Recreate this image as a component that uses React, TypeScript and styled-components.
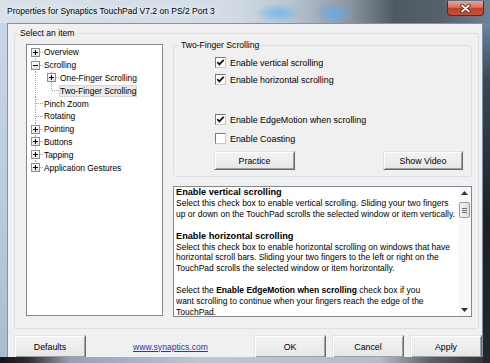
import React from 'react';
import styled, { createGlobalStyle } from 'styled-components';

const Global = createGlobalStyle`
  html, body { margin: 0; padding: 0; background: #fff; overflow: hidden; }
  body { font-family: "Liberation Sans", Arial, sans-serif; }
  #root { width: 490px; height: 363px; }
`;

const FONT = `"Liberation Sans", Arial, sans-serif`;

const Window = styled.div`
  width: 490px;
  height: 363px;
  box-sizing: border-box;
  display: flex;
  flex-direction: column;
  padding-bottom: 6px;
  overflow: hidden;
  background:
    linear-gradient(180deg, #7f9dbd 0%, #3c4855 22%, #1d2127 60%, #23282e 100%) right top / 7px 100% no-repeat,
    linear-gradient(90deg, #121416 0px, #2a2e33 28px, #8fa4ba 70px, #b6c8da 200px, #aebfd0 380px, #59636d 430px, #2a2f35 490px) left bottom / 100% 6px no-repeat,
    linear-gradient(180deg, #c9d8e7 0%, #b8cadc 60%, #a9bccf 100%);
`;

const TitleBar = styled.div`
  height: 23px;
  flex: none;
  display: flex;
  align-items: flex-start;
  padding: 0 6px 0 7px;
  background:
    radial-gradient(ellipse 24px 10px at 278px 13px, rgba(110, 180, 235, 0.85), rgba(110, 180, 235, 0)),
    radial-gradient(ellipse 22px 10px at 334px 13px, rgba(95, 170, 232, 0.85), rgba(95, 170, 232, 0)),
    linear-gradient(90deg, #d8e1ea 0px, #d3dce6 230px, #b9c5d0 290px, #8a95a0 350px, #4e5964 395px, #55606b 440px, #6e8196 490px);
`;

const TitleText = styled.div`
  margin-top: 5px;
  font-family: ${FONT};
  font-size: 8.5px;
  line-height: 13px;
  color: #000;
  white-space: nowrap;
  text-shadow: 0 0 4px #fff, 0 0 7px rgba(255, 255, 255, 0.9);
`;

const CloseButton = styled.div`
  margin-left: auto;
  margin-top: 1px;
  width: 37px;
  height: 15px;
  box-sizing: border-box;
  border: 1px solid #6b2219;
  border-top: none;
  border-radius: 0 0 4px 4px;
  background: linear-gradient(180deg, #e9a497 0%, #d6725f 45%, #c1402c 52%, #c65038 100%);
  display: flex;
  align-items: center;
  justify-content: center;
`;

const Client = styled.div`
  flex: 1;
  min-height: 0;
  margin: 0 7px;
  background: #f0f0f0;
  border: 1px solid #8094a9;
  border-bottom: none;
  display: flex;
  flex-direction: column;
  padding: 0 3px 0 6px;
  overflow: hidden;
`;

const GroupBox = styled.div<{ $mt: number }>`
  flex: none;
  display: flex;
  flex-direction: column;
  margin-top: ${(p) => p.$mt}px;
  border: 1px solid #d5dfe5;
  border-radius: 3px;
`;

const Caption = styled.div<{ $ml: number }>`
  align-self: flex-start;
  margin-top: -6px;
  margin-left: ${(p) => p.$ml}px;
  padding: 0 2px;
  background: #f0f0f0;
  font-family: ${FONT};
  font-size: 8.6px;
  line-height: 11px;
  color: #000;
  white-space: nowrap;
`;

const GroupBody = styled.div`
  display: flex;
  align-items: flex-start;
  padding: 1px 6px 11px 11px;
`;

const Tree = styled.div`
  flex: none;
  width: 137px;
  height: 272px;
  box-sizing: border-box;
  margin-top: 4px;
  border: 1px solid #828790;
  background: #fff;
  padding-top: 1px;
  display: flex;
  flex-direction: column;
`;

const TreeRow = styled.div`
  height: 12.8px;
  display: flex;
  align-items: stretch;
`;

type VLine = 'full' | 'top' | 'bottom' | 'none';

const dotV = 'repeating-linear-gradient(to bottom, #a3a3a3 0 1px, transparent 1px 2px)';
const dotH = 'repeating-linear-gradient(to right, #a3a3a3 0 1px, transparent 1px 2px)';

const cellBg = (v: VLine, h: boolean) => {
  const layers: string[] = [];
  if (h) layers.push(`${dotH} 9px 50% / 7px 1px no-repeat`);
  if (v === 'full') layers.push(`${dotV} 8px 0 / 1px 100% no-repeat`);
  if (v === 'top') layers.push(`${dotV} 8px 0 / 1px 50% no-repeat`);
  if (v === 'bottom') layers.push(`${dotV} 8px 100% / 1px 50% no-repeat`);
  return layers.length ? layers.join(', ') : 'none';
};

const GuideCell = styled.div<{ $v: VLine; $h: boolean }>`
  flex: none;
  width: 16px;
  display: flex;
  align-items: center;
  background: ${(p) => cellBg(p.$v, p.$h)};
`;

const Expander = styled.span`
  width: 9px;
  height: 9px;
  box-sizing: border-box;
  margin-left: 4px;
  border: 1px solid #8e8f8f;
  background: linear-gradient(180deg, #ffffff, #e4e4e4);
  display: flex;
  align-items: center;
  justify-content: center;
`;

const TreeLabel = styled.span<{ $selected?: boolean }>`
  align-self: center;
  padding: 0 1px;
  font-family: ${FONT};
  font-size: 8.4px;
  line-height: 12px;
  color: #000;
  white-space: nowrap;
  background: ${(p) => (p.$selected ? '#ebebeb' : 'transparent')};
  box-shadow: ${(p) => (p.$selected ? 'inset 0 0 0 1px #d6d6d6' : 'none')};
`;

const RightColumn = styled.div`
  flex: 1;
  min-width: 0;
  margin-left: 10px;
  display: flex;
  flex-direction: column;
`;

const OptionsBody = styled.div`
  display: flex;
  flex-direction: column;
  padding: 3px 8px 6px 40px;
`;

const CheckRow = styled.div<{ $mt?: number }>`
  height: 17px;
  margin-top: ${(p) => p.$mt ?? 0}px;
  padding-left: 1px;
  display: flex;
  align-items: center;
  gap: 4px;
`;

const CheckBox = styled.span`
  flex: none;
  width: 11px;
  height: 11px;
  box-sizing: border-box;
  border: 1px solid;
  border-color: #7a7a7a #c9c9c9 #c9c9c9 #7a7a7a;
  background: #fff;
  display: flex;
  align-items: center;
  justify-content: center;
`;

const CheckLabel = styled.span`
  font-family: ${FONT};
  font-size: 8.9px;
  color: #000;
  white-space: nowrap;
`;

const ButtonRow = styled.div`
  margin-top: 4px;
  display: flex;
  justify-content: space-between;
`;

const PushButton = styled.div<{ $w: number; $h: number }>`
  flex: none;
  width: ${(p) => p.$w}px;
  height: ${(p) => p.$h}px;
  box-sizing: border-box;
  border: 1px solid;
  border-color: #e3e3e3 #696969 #696969 #e3e3e3;
  box-shadow: inset 1px 1px 0 #ffffff, inset -1px -1px 0 #a0a0a0;
  background: linear-gradient(180deg, #f3f3f3 0%, #ededed 50%, #e6e6e6 100%);
  font-family: ${FONT};
  font-size: 8.8px;
  color: #000;
  display: flex;
  align-items: center;
  justify-content: center;
  white-space: nowrap;
`;

const HelpBox = styled.div`
  flex: none;
  height: 131px;
  box-sizing: border-box;
  margin-top: 9px;
  border: 1px solid #828790;
  background: #fff;
  display: flex;
  overflow: hidden;
`;

const HelpText = styled.div`
  flex: 1;
  min-width: 0;
  padding: 0 2px;
  font-family: ${FONT};
  font-size: 8.5px;
  line-height: 10.9px;
  color: #000;
  overflow: hidden;
`;

const Para = styled.div`
  margin-bottom: 10.9px;
`;

const Line = styled.div`
  white-space: nowrap;
`;

const Heading = styled.div`
  white-space: nowrap;
  font-weight: bold;
  font-size: 9.2px;
`;

const ScrollBar = styled.div`
  flex: none;
  width: 13px;
  background: #f8f8f8;
  display: flex;
  flex-direction: column;
`;

const ScrollArrow = styled.div`
  height: 12px;
  flex: none;
  display: flex;
  align-items: center;
  justify-content: center;
`;

const Track = styled.div`
  flex: 1;
  padding-top: 3px;
  display: flex;
  flex-direction: column;
  align-items: center;
`;

const Thumb = styled.div`
  width: 11px;
  height: 16px;
  box-sizing: border-box;
  border: 1px solid #9b9b9b;
  border-radius: 2px;
  background: linear-gradient(90deg, #f4f4f4, #dcdcdc);
  display: flex;
  flex-direction: column;
  align-items: center;
  justify-content: center;
  gap: 1px;
`;

const Grip = styled.span`
  width: 5px;
  height: 1px;
  background: #6f6f6f;
`;

const BottomBar = styled.div`
  flex: none;
  height: 23px;
  margin-top: 6px;
  margin-right: -3px;
  display: flex;
  align-items: center;
`;

const Link = styled.span`
  margin-left: 47px;
  font-family: ${FONT};
  font-size: 8.6px;
  color: #2636b8;
  text-decoration: underline;
  white-space: nowrap;
`;

const DialogButtons = styled.div`
  margin-left: auto;
  display: flex;
  gap: 6px;
`;

const Plus = ({ minus }: { minus?: boolean }) => (
  <svg width="5" height="5" viewBox="0 0 5 5">
    <rect x="0" y="2" width="5" height="1" fill="#000" />
    {!minus && <rect x="2" y="0" width="1" height="5" fill="#000" />}
  </svg>
);

const Check = () => (
  <svg width="9" height="9" viewBox="0 0 9 9">
    <path d="M1.3 4.2 L3.4 6.4 L7.7 1.9" fill="none" stroke="#111" strokeWidth="1.7" />
  </svg>
);

type CellDef = { v: VLine; h?: boolean; exp?: '+' | '-' };
type RowDef = { cells: CellDef[]; label: string; selected?: boolean };

const treeRows: RowDef[] = [
  { cells: [{ v: 'bottom', h: true, exp: '+' }], label: 'Overview' },
  { cells: [{ v: 'full', h: true, exp: '-' }], label: 'Scrolling' },
  { cells: [{ v: 'full' }, { v: 'full', h: true, exp: '+' }], label: 'One-Finger Scrolling' },
  { cells: [{ v: 'full' }, { v: 'top', h: true }], label: 'Two-Finger Scrolling', selected: true },
  { cells: [{ v: 'full', h: true }], label: 'Pinch Zoom' },
  { cells: [{ v: 'full', h: true }], label: 'Rotating' },
  { cells: [{ v: 'full', h: true, exp: '+' }], label: 'Pointing' },
  { cells: [{ v: 'full', h: true, exp: '+' }], label: 'Buttons' },
  { cells: [{ v: 'full', h: true, exp: '+' }], label: 'Tapping' },
  { cells: [{ v: 'top', h: true, exp: '+' }], label: 'Application Gestures' },
];

const options = [
  { label: 'Enable vertical scrolling', checked: true, mt: 0 },
  { label: 'Enable horizontal scrolling', checked: true, mt: 0 },
  { label: 'Enable EdgeMotion when scrolling', checked: true, mt: 23 },
  { label: 'Enable Coasting', checked: false, mt: 2 },
];

export default function App() {
  return (
    <>
      <Global />
      <Window>
        <TitleBar>
          <TitleText>Properties for Synaptics TouchPad V7.2 on PS/2 Port 3</TitleText>
          <CloseButton>
            <svg width="11" height="9" viewBox="0 0 11 9">
              <path d="M2 1.5 L9 7.5 M9 1.5 L2 7.5" stroke="#5a1a12" strokeWidth="3.4" strokeLinecap="round" />
              <path d="M2 1.5 L9 7.5 M9 1.5 L2 7.5" stroke="#ffffff" strokeWidth="1.8" strokeLinecap="round" />
            </svg>
          </CloseButton>
        </TitleBar>
        <Client>
          <GroupBox $mt={9}>
            <Caption $ml={3}>Select an item</Caption>
            <GroupBody>
              <Tree>
                {treeRows.map((row) => (
                  <TreeRow key={row.label}>
                    {row.cells.map((c, i) => (
                      <GuideCell key={i} $v={c.v} $h={!!c.h}>
                        {c.exp && (
                          <Expander>
                            <Plus minus={c.exp === '-'} />
                          </Expander>
                        )}
                      </GuideCell>
                    ))}
                    <TreeLabel $selected={row.selected}>{row.label}</TreeLabel>
                  </TreeRow>
                ))}
              </Tree>
              <RightColumn>
                <GroupBox $mt={5}>
                  <Caption $ml={5}>Two-Finger Scrolling</Caption>
                  <OptionsBody>
                    {options.map((o) => (
                      <CheckRow key={o.label} $mt={o.mt}>
                        <CheckBox>{o.checked && <Check />}</CheckBox>
                        <CheckLabel>{o.label}</CheckLabel>
                      </CheckRow>
                    ))}
                    <ButtonRow>
                      <PushButton $w={81} $h={19}>Practice</PushButton>
                      <PushButton $w={80} $h={19}>Show Video</PushButton>
                    </ButtonRow>
                  </OptionsBody>
                </GroupBox>
                <HelpBox>
                  <HelpText>
                    <Para>
                      <Heading>Enable vertical scrolling</Heading>
                      <Line>Select this check box to enable vertical scrolling. Sliding your two fingers</Line>
                      <Line>up or down on the TouchPad scrolls the selected window or item vertically.</Line>
                    </Para>
                    <Para>
                      <Heading>Enable horizontal scrolling</Heading>
                      <Line>Select this check box to enable horizontal scrolling on windows that have</Line>
                      <Line>horizontal scroll bars. Sliding your two fingers to the left or right on the</Line>
                      <Line>TouchPad scrolls the selected window or item horizontally.</Line>
                    </Para>
                    <Para>
                      <Line>
                        Select the <b>Enable EdgeMotion when scrolling</b> check box if you
                      </Line>
                      <Line>want scrolling to continue when your fingers reach the edge of the</Line>
                      <Line>TouchPad.</Line>
                    </Para>
                  </HelpText>
                  <ScrollBar>
                    <ScrollArrow>
                      <svg width="7" height="4" viewBox="0 0 7 4">
                        <path d="M0 4 L3.5 0 L7 4 Z" fill="#333" />
                      </svg>
                    </ScrollArrow>
                    <Track>
                      <Thumb>
                        <Grip />
                        <Grip />
                        <Grip />
                      </Thumb>
                    </Track>
                    <ScrollArrow>
                      <svg width="7" height="4" viewBox="0 0 7 4">
                        <path d="M0 0 L3.5 4 L7 0 Z" fill="#333" />
                      </svg>
                    </ScrollArrow>
                  </ScrollBar>
                </HelpBox>
              </RightColumn>
            </GroupBody>
          </GroupBox>
          <BottomBar>
            <PushButton $w={72} $h={23}>Defaults</PushButton>
            <Link>www.synaptics.com</Link>
            <DialogButtons>
              <PushButton $w={72} $h={23}>OK</PushButton>
              <PushButton $w={72} $h={23}>Cancel</PushButton>
              <PushButton $w={72} $h={23}>Apply</PushButton>
            </DialogButtons>
          </BottomBar>
        </Client>
      </Window>
    </>
  );
}
